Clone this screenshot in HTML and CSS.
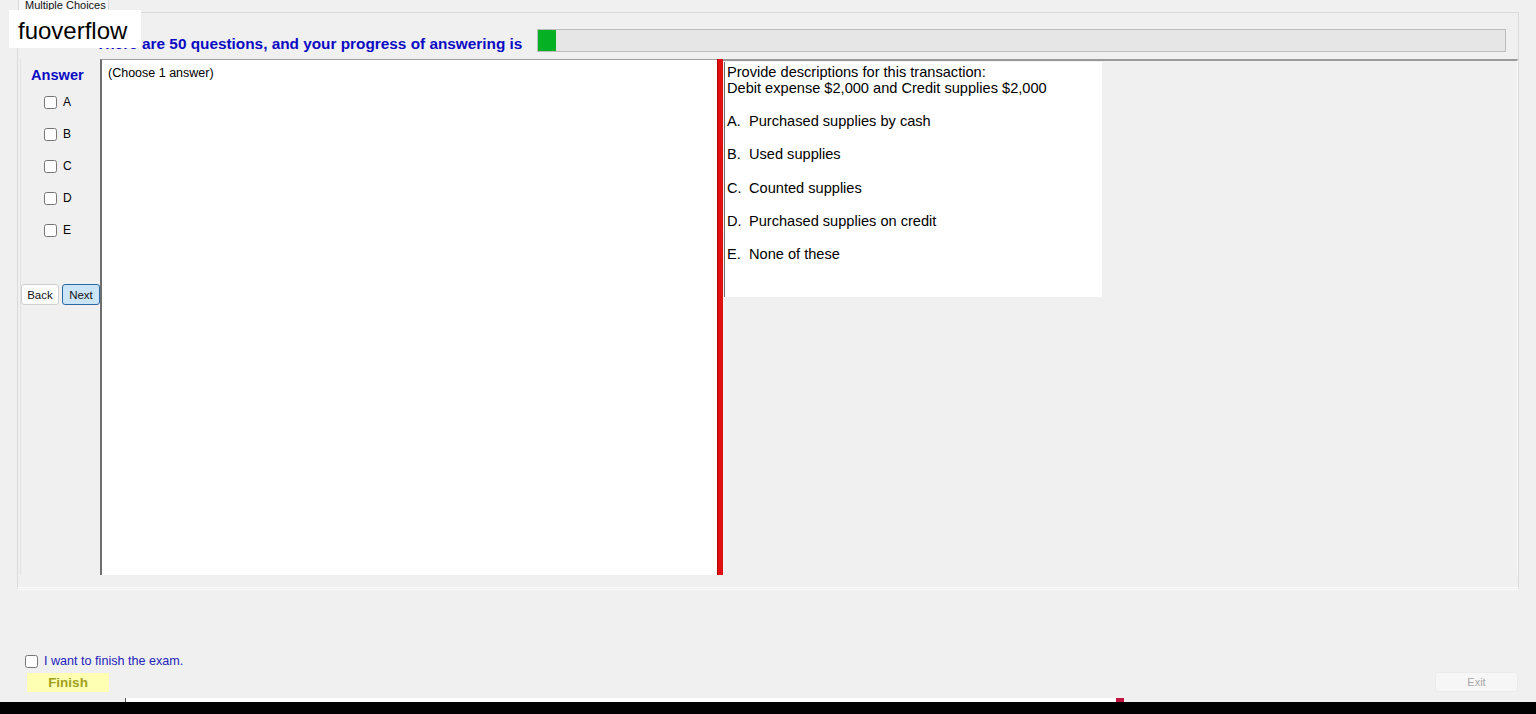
FILE: index.html
```html
<!DOCTYPE html>
<html lang="en">
<head>
	<meta charset="UTF-8">
	<meta name="viewport" content="width=device-width, initial-scale=1">
	<title>Multiple Choices - Exam</title>
	<link rel="stylesheet" href="styles.css">
</head>
<body>
	<div class="watermark">fuoverflow</div>

	<div class="tab-strip">
		<div class="tab">Multiple Choices</div>
	</div>

	<div class="tab-page">
		<div class="progress-row">
			<span class="progress-label">There are 50 questions, and your progress of answering is</span>
			<div class="progress-bar">
				<div class="progress-fill" style="width: 18px"></div>
			</div>
		</div>

		<div class="main">
			<div class="sidebar">
				<div class="answer-title">Answer</div>
				<ul class="choices">
					<li><label><input type="checkbox"> A</label></li>
					<li><label><input type="checkbox"> B</label></li>
					<li><label><input type="checkbox"> C</label></li>
					<li><label><input type="checkbox"> D</label></li>
					<li><label><input type="checkbox"> E</label></li>
				</ul>
				<div class="nav-buttons">
					<button type="button" class="btn">Back</button>
					<button type="button" class="btn btn-active">Next</button>
				</div>
			</div>

			<div class="answer-box">(Choose 1 answer)</div>

			<div class="splitter"></div>

			<div class="question-panel">
				<div class="question-box">
					<p class="question-text">Provide descriptions for this transaction:<br>Debit expense $2,000 and Credit supplies $2,000</p>
					<ol class="options">
						<li><span class="opt-key">A.</span>Purchased supplies by cash</li>
						<li><span class="opt-key">B.</span>Used supplies</li>
						<li><span class="opt-key">C.</span>Counted supplies</li>
						<li><span class="opt-key">D.</span>Purchased supplies on credit</li>
						<li><span class="opt-key">E.</span>None of these</li>
					</ol>
				</div>
			</div>
		</div>
	</div>

	<div class="footer">
		<div class="footer-left">
			<label class="finish-check"><input type="checkbox"> I want to finish the exam.</label>
			<button type="button" class="btn-finish">Finish</button>
		</div>
		<button type="button" class="btn-exit">Exit</button>
	</div>

	<div class="taskbar-edge">
		<div class="edge-white"></div>
		<div class="edge-red"></div>
	</div>
	<div class="taskbar"></div>
</body>
</html>
```

FILE: styles.css
```css
:root {
	--bg: #f0f0f0;
	--blue: #0a0ac4;
	--line: #dadada;
	--dark-edge: #6e6e6e;
	--text: #000;
}

* {
	box-sizing: border-box;
}

body {
	margin: 0;
	height: 714px;
	overflow: hidden;
	background: var(--bg);
	font-family: "Liberation Sans", Arial, sans-serif;
	color: var(--text);
}

/* watermark overlay */
.watermark {
	position: absolute;
	left: 9px;
	top: 10px;
	width: 132px;
	height: 38px;
	padding: 8px 0 0 9px;
	background: #fff;
	font-size: 24px;
	line-height: 26px;
	z-index: 2;
}

.tab-strip {
	height: 12px;
	display: flex;
}

.tab {
	margin-left: 18px;
	width: 91px;
	height: 13px;
	padding-left: 6px;
	border: 1px solid var(--line);
	border-top: none;
	border-bottom: none;
	background: #f7f7f7;
	font-size: 11px;
	line-height: 11px;
	color: #111;
	position: relative;
	z-index: 1;
}

.tab-page {
	margin-left: 17px;
	width: 1502px;
	height: 578px;
	border: 1px solid var(--line);
	border-bottom: 3px double #fafafa;
	padding-top: 16px;
}

.progress-row {
	display: flex;
	align-items: flex-end;
	height: 23px;
}

.progress-label {
	margin-left: 78px;
	font-size: 15.35px;
	font-weight: bold;
	color: var(--blue);
	line-height: 17px;
	white-space: nowrap;
}

.progress-bar {
	margin-left: auto;
	margin-right: 12px;
	width: 969px;
	height: 23px;
	border: 1px solid #bcbcbc;
	background: #e6e6e6;
}

.progress-fill {
	height: 100%;
	background: #06b025;
}

.main {
	display: flex;
	margin-top: 7px;
	margin-left: 2px;
	height: 516px;
	border-left: 1px solid #e2e2e2;
}

.sidebar {
	width: 79px;
	padding-top: 8px;
}

.answer-title {
	margin-left: 10px;
	font-size: 14.6px;
	font-weight: bold;
	color: var(--blue);
}

.choices {
	list-style: none;
	margin: 12px 0 0 23px;
	padding: 0;
}

.choices li {
	height: 32px;
	font-size: 12px;
}

.choices label {
	display: flex;
	align-items: center;
	gap: 6px;
}

.choices input,
.finish-check input {
	margin: 0;
	width: 13px;
	height: 13px;
}

.nav-buttons {
	display: flex;
	gap: 3px;
	margin: 29px 0 0 0;
}

.btn {
	height: 21px;
	width: 38px;
	padding: 0;
	border: 1px solid #cfcfcf;
	border-radius: 3px;
	background: #fdfdfd;
	font-family: inherit;
	font-size: 11.5px;
	color: #111;
}

.btn-active {
	border-color: #2a6aa0;
	background: #cce4f7;
}

.answer-box {
	width: 617px;
	background: #fff;
	border-top: 1px solid #a0a0a0;
	border-left: 2px solid var(--dark-edge);
	padding: 6px 0 0 6px;
	font-size: 12.5px;
}

.splitter {
	width: 6px;
	background: #e01010;
	border-left: 1px solid #b00000;
}

.question-panel {
	flex: 1;
	border-top: 2px solid #9a9a9a;
	border-right: 1px solid #fafafa;
	padding-top: 1px;
	padding-left: 1px;
}

.question-box {
	width: 378px;
	height: 235px;
	background: #fff;
	border-left: 1px solid var(--dark-edge);
	padding: 2px 0 0 2px;
	font-size: 14.6px;
}

.question-text {
	margin: 0;
	line-height: 16px;
}

.options {
	list-style: none;
	margin: 17px 0 0 0;
	padding: 0;
}

.options li {
	height: 33.25px;
	line-height: 17px;
}

.opt-key {
	display: inline-block;
	width: 22px;
}

.footer {
	display: flex;
	justify-content: space-between;
	align-items: flex-end;
	height: 108px;
	padding: 0 18px 6px 25px;
}

.footer-left {
	display: flex;
	flex-direction: column;
	gap: 5px;
}

.finish-check {
	display: flex;
	align-items: center;
	gap: 6px;
	font-size: 12.6px;
	color: #2222bb;
}

.btn-finish {
	margin-left: 2px;
	width: 82px;
	height: 19px;
	padding: 0;
	border: none;
	background: #ffffb4;
	font-family: inherit;
	font-size: 13.5px;
	font-weight: bold;
	color: #a0a020;
}

.btn-exit {
	width: 83px;
	height: 20px;
	padding: 0;
	border: 1px solid #ebebeb;
	border-radius: 3px;
	background: #f6f6f6;
	font-family: inherit;
	font-size: 11px;
	color: #a8a8a8;
}

.taskbar-edge {
	display: flex;
	height: 4px;
}

.edge-white {
	margin-left: 125px;
	width: 991px;
	background: #fff;
	border-left: 1px solid #555;
}

.edge-red {
	width: 8px;
	background: #c0143c;
}

.taskbar {
	height: 20px;
	background: #000;
}
```
